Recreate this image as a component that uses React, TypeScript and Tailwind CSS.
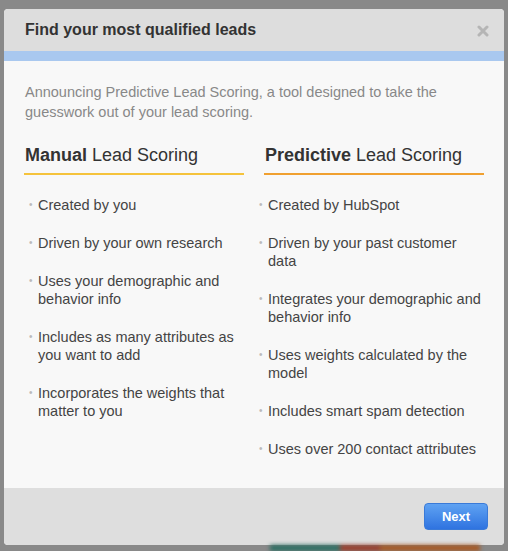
import React from "react";

const manual = [
  "Created by you",
  "Driven by your own research",
  "Uses your demographic and behavior info",
  "Includes as many attributes as you want to add",
  "Incorporates the weights that matter to you",
];

const predictive = [
  "Created by HubSpot",
  "Driven by your past customer data",
  "Integrates your demographic and behavior info",
  "Uses weights calculated by the model",
  "Includes smart spam detection",
  "Uses over 200 contact attributes",
];

function Column({
  strong,
  items,
  accent,
  listShift,
}: {
  strong: string;
  items: string[];
  accent: string;
  listShift: string;
}) {
  return (
    <div className="flex flex-col">
      <h3 className="text-[18px] leading-[24px] text-[#333] pl-[1px] pb-[6px]">
        <span className="font-bold">{strong}</span> Lead Scoring
      </h3>
      <div className={`h-[2px] ${accent}`} />
      <ul className={`flex flex-col gap-[20px] pt-[21px] ${listShift}`}>
        {items.map((t) => (
          <li key={t} className="flex text-[14.5px] leading-[18px] text-[#444]">
            <span className="w-[9px] shrink-0 text-[10px] text-[#bbb]">•</span>
            <span>{t}</span>
          </li>
        ))}
      </ul>
    </div>
  );
}

export default function App() {
  return (
    <div
      className="h-[551px] w-[508px] overflow-hidden bg-[#898989] flex flex-col pt-[9px] px-[4px]"
      style={{ fontFamily: '"Liberation Sans", Arial, sans-serif' }}
    >
      <div className="w-[500px] h-[536px] rounded-[4px] overflow-hidden flex flex-col bg-[#f8f8f8] shrink-0">
        <div className="h-[42px] bg-[#dddddd] flex items-center justify-between pl-[21px] pr-[15px]">
          <h2 className="text-[16px] font-bold text-[#333]">Find your most qualified leads</h2>
          <svg width="12" height="12" viewBox="0 0 12 12" className="mt-[1px]">
            <path d="M2 2 L10 10 M10 2 L2 10" stroke="#b5b5b5" strokeWidth="3" strokeLinecap="round" />
          </svg>
        </div>
        <div className="h-[10px] bg-[#a9c8ef]" />
        <div className="flex-1 px-[20px] pt-[21px]">
          <p className="text-[14.5px] leading-[20px] text-[#888] pl-[1px]">
            Announcing Predictive Lead Scoring, a tool designed to take the guesswork out of your lead scoring.
          </p>
          <div className="grid grid-cols-2 gap-[20px] pt-[21px]">
            <Column strong="Manual" items={manual} accent="bg-[#f5c33c]" listShift="pl-[5px]" />
            <Column strong="Predictive" items={predictive} accent="bg-[#f0a030]" listShift="-ml-[5px] -mr-[4px]" />
          </div>
        </div>
        <div className="h-[57px] bg-[#dedede] flex items-center justify-end pr-[16px]">
          <button className="w-[64px] h-[27px] rounded-[4px] bg-gradient-to-b from-[#5fa2f2] to-[#2f73e0] border border-[#3a7ad8] text-white text-[13px] font-bold">
            Next
          </button>
        </div>
      </div>
      <div className="flex h-[8px] blur-[2px]">
        <div className="w-[266px]" />
        <div className="w-[70px] bg-[#2a6e62]" />
        <div className="w-[40px] bg-[#9a3a28]" />
        <div className="w-[100px] bg-[#a8561e]" />
      </div>
    </div>
  );
}
